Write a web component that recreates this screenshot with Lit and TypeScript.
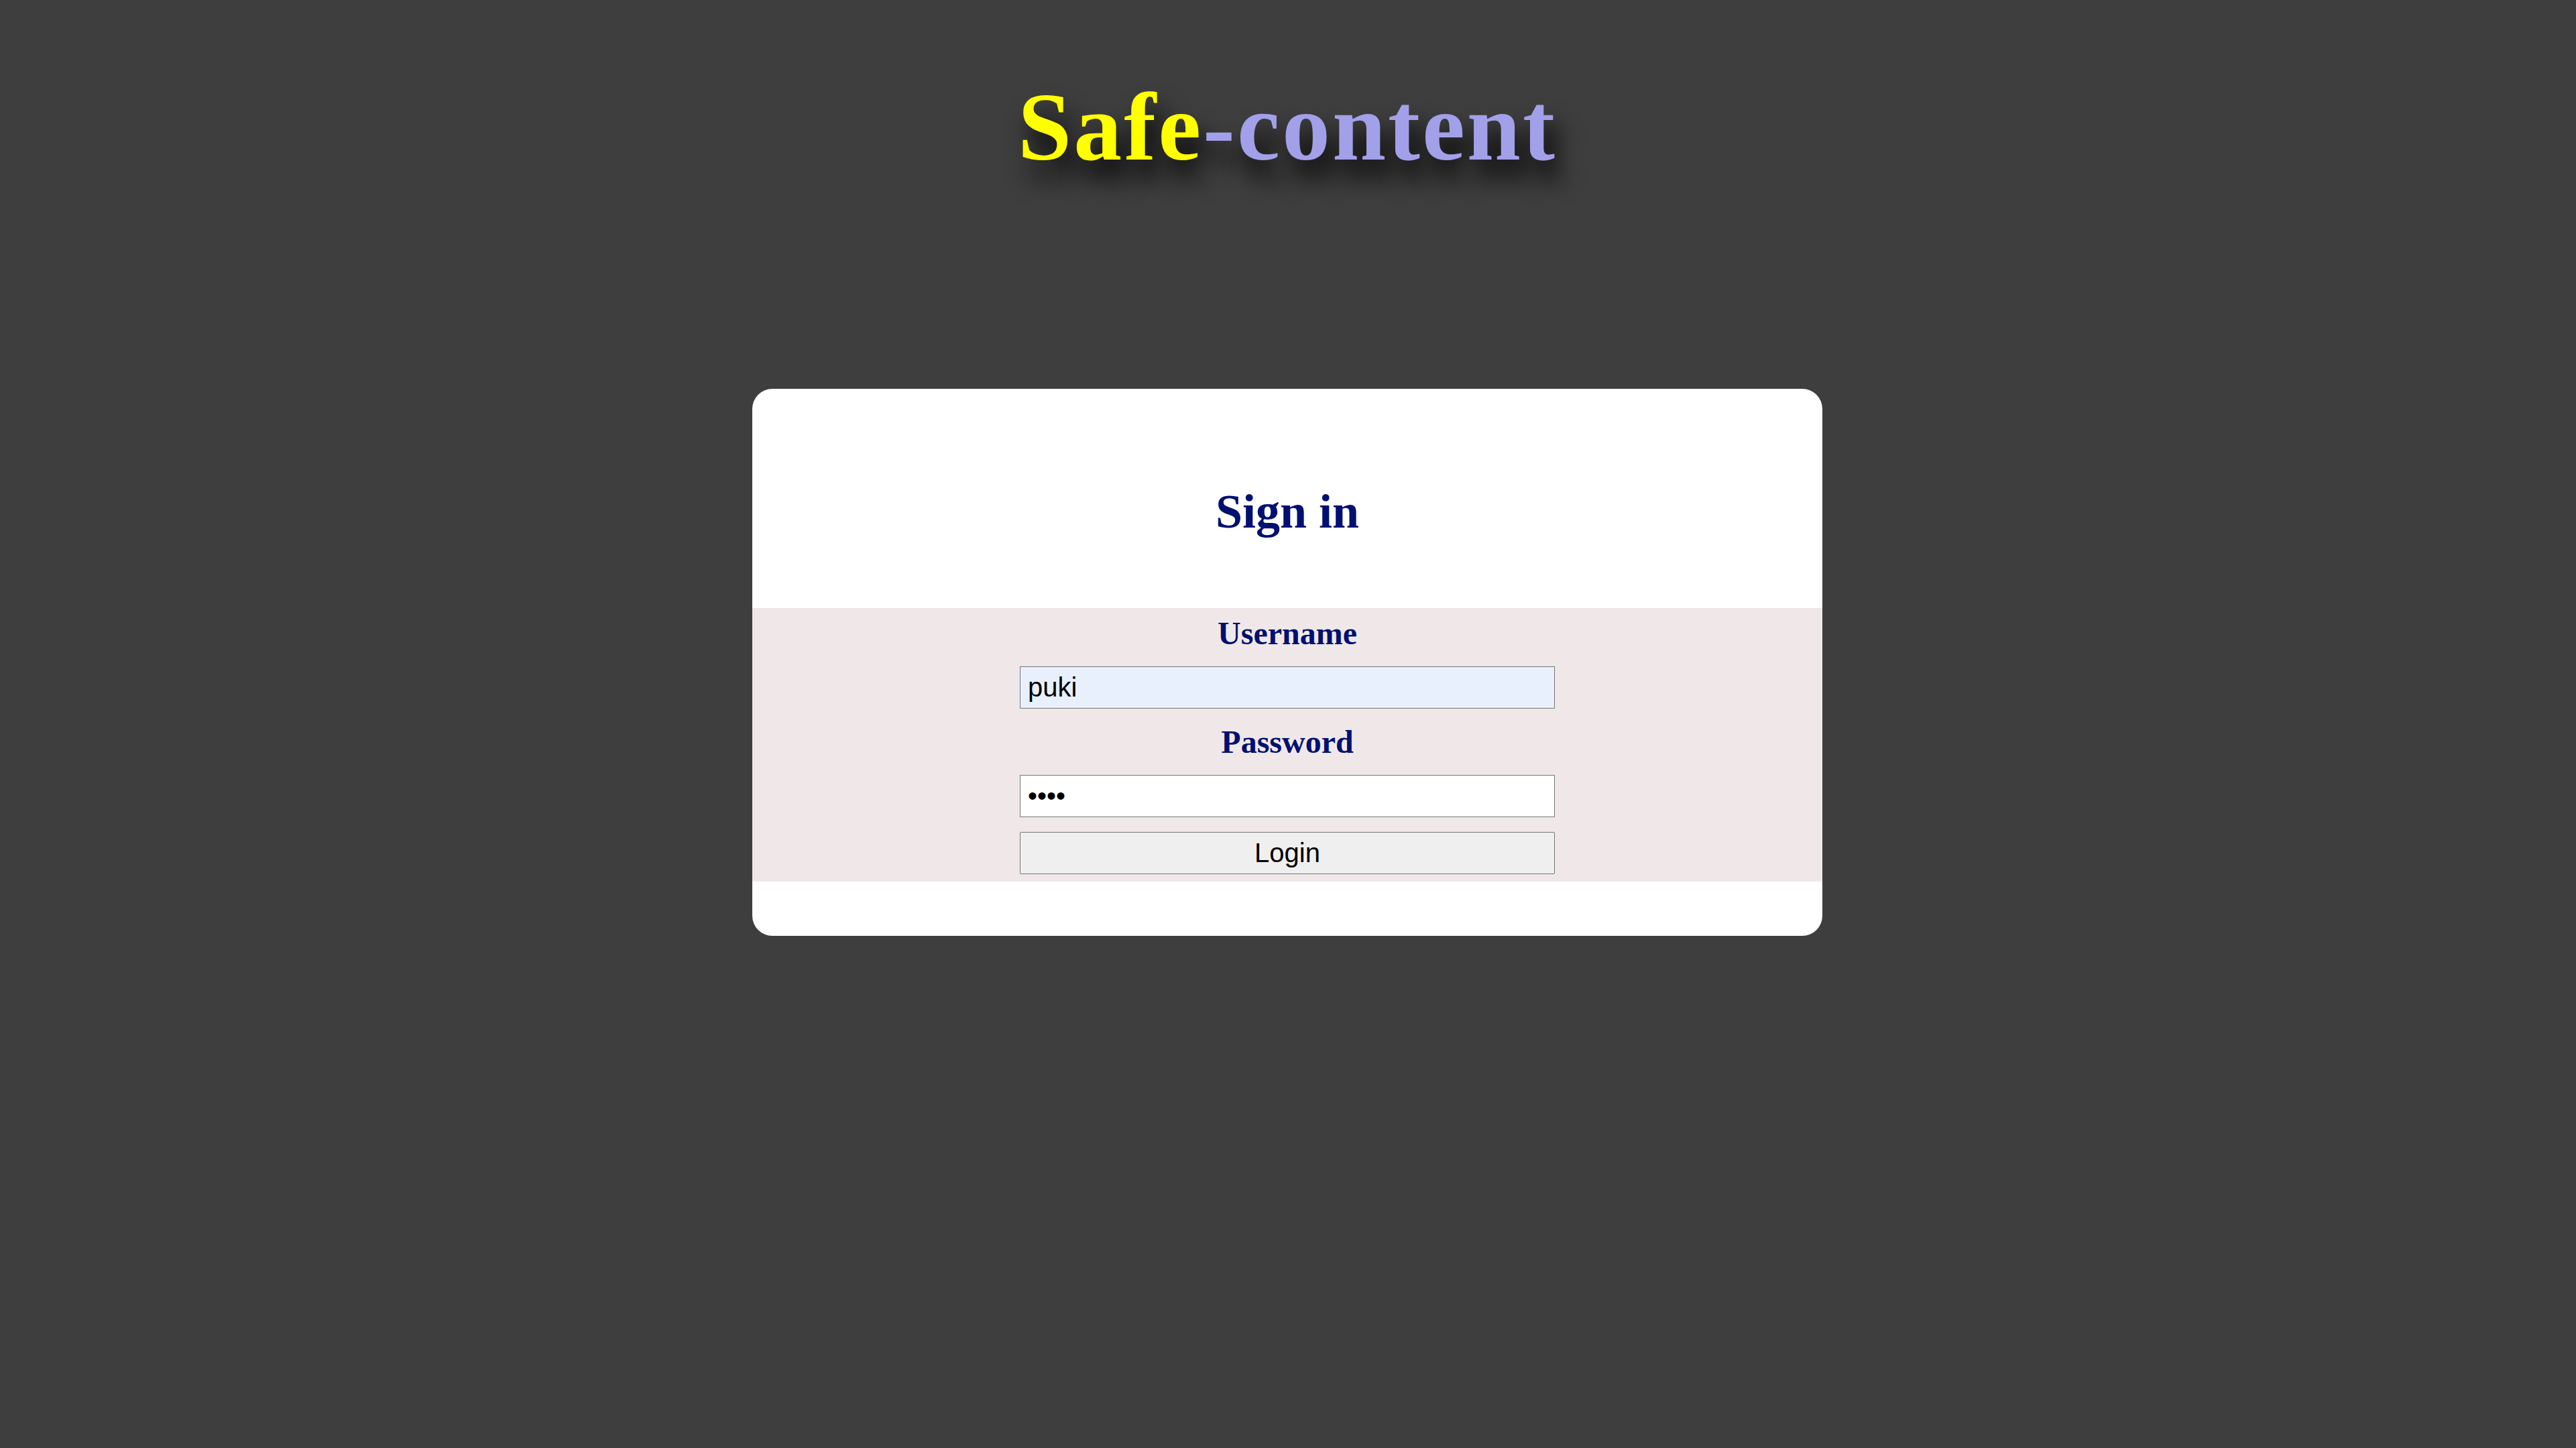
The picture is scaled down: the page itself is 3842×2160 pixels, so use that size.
import { LitElement, html, css } from "lit";
import { customElement, state } from "lit/decorators.js";

@customElement("app-root")
export class AppRoot extends LitElement {
  static styles = css`
    :host {
      display: block;
      box-sizing: border-box;
      min-height: 100vh;
      padding: 108px 22px 80px 20px;
      background: #3e3e3e;
      font-family: "Liberation Serif", "Times New Roman", serif;
    }
    .page {
      display: flex;
      flex-direction: column;
      align-items: center;
      gap: 308px;
    }
    .brand {
      margin: 0;
      font-size: 144px;
      line-height: 164px;
      letter-spacing: 3px;
      color: #a2a0e8;
      text-shadow: 12px 28px 36px #000;
    }
    .accent {
      color: #ffff00;
    }
    .card {
      box-sizing: border-box;
      width: 42%;
      padding-bottom: 81px;
      border-radius: 30px;
      background: #fff;
      color: #001070;
      text-align: center;
    }
    .heading {
      margin: 0;
      padding: 141px 0 102px;
      font-size: 72px;
      line-height: 84px;
    }
    .form {
      display: flex;
      flex-direction: column;
      align-items: center;
      gap: 22px;
      padding: 10px 0 11px;
      background: #f0e8e8;
    }
    .label {
      font-size: 48px;
      line-height: 55px;
      font-weight: bold;
    }
    .control {
      box-sizing: border-box;
      width: 50%;
      height: 63px;
      margin: 0;
      padding: 0 11px;
      border: 1px solid #767676;
      border-radius: 0;
      background: #fff;
      color: #000;
      font: 40px "Liberation Sans", Arial, sans-serif;
    }
    .filled {
      background: #e8f0fe;
    }
    .submit {
      border-radius: 2px;
      background: #efefef;
    }
  `;

  @state() private username = "puki";
  @state() private password = "puki";

  private onSubmit(event: Event) {
    event.preventDefault();
  }

  render() {
    return html`
      <main class="page">
        <h1 class="brand"><span class="accent">Safe</span>-content</h1>
        <section class="card">
          <h2 class="heading">Sign in</h2>
          <form class="form" @submit=${this.onSubmit}>
            <label class="label" for="username">Username</label>
            <input
              class="control filled"
              id="username"
              type="text"
              autocomplete="username"
              .value=${this.username}
              @input=${(e: Event) => (this.username = (e.target as HTMLInputElement).value)}
            />
            <label class="label" for="password">Password</label>
            <input
              class="control"
              id="password"
              type="password"
              autocomplete="current-password"
              .value=${this.password}
              @input=${(e: Event) => (this.password = (e.target as HTMLInputElement).value)}
            />
            <button class="control submit" type="submit">Login</button>
          </form>
        </section>
      </main>
    `;
  }
}
